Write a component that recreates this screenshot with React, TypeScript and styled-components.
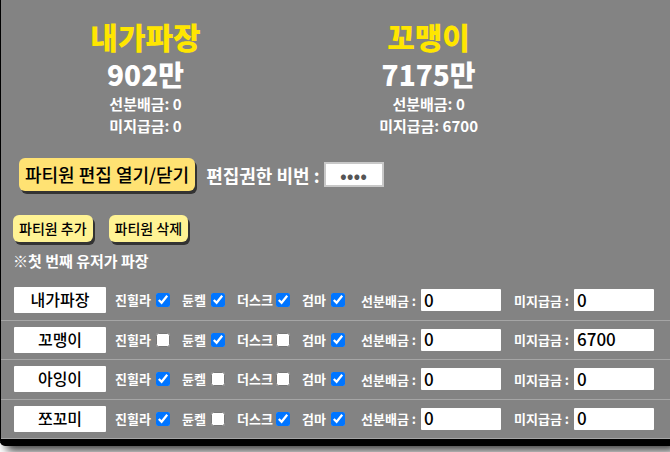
import React from "react";
import styled, { createGlobalStyle } from "styled-components";

const GlobalStyle = createGlobalStyle`
  *, *::before, *::after { box-sizing: border-box; }
  body {
    margin: 0;
    background: #fff;
    font-family: "Noto Sans CJK KR", "Noto Sans", sans-serif;
    overflow: hidden;
  }
  button, input { font-family: inherit; }
`;

const Page = styled.div`
  padding-bottom: 6px;
`;

const Panel = styled.main`
  background: #838383;
  color: #fff;
  font-weight: 700;
  border-left: 1px solid #000;
  border-bottom: 7px solid #000;
  border-bottom-left-radius: 5px;
  box-shadow: 6px 5px 10px rgba(0, 0, 0, 0.75);
`;

const Summary = styled.section`
  display: grid;
  grid-template-columns: repeat(2, 42.5%);
  padding: 17px 0 0 3px;
`;

const Member = styled.article`
  display: flex;
  flex-direction: column;
  align-items: center;
`;

const MemberName = styled.h2`
  margin: 0;
  color: #ffe600;
  font-size: 30px;
  font-weight: 900;
  line-height: 38px;
`;

const Share = styled.p`
  margin: 0;
  font-size: 28px;
  font-weight: 900;
  line-height: 38px;
`;

const Detail = styled.p`
  margin: 0;
  font-size: 15px;
  line-height: 22px;
`;

const EditBar = styled.section`
  display: flex;
  align-items: center;
  padding: 21px 0 0 18px;
`;

const ActionButton = styled.button<{ $large?: boolean }>`
  border: 0;
  border-radius: 6px;
  padding: 0 6px 2px;
  height: ${(p) => (p.$large ? 33 : 27)}px;
  background: ${(p) => (p.$large ? "#ffe273" : "#fff394")};
  box-shadow: 2px 3px 0 #333;
  color: #000;
  font-size: ${(p) => (p.$large ? 18 : 14)}px;
  font-weight: 500;
  white-space: nowrap;
  cursor: pointer;
`;

const PasswordLabel = styled.label`
  display: flex;
  align-items: center;
  gap: 4px;
  margin-left: 11px;
  font-size: 18px;
  line-height: 24px;
  white-space: nowrap;
`;

const PasswordInput = styled.input`
  width: 60px;
  height: 25px;
  padding: 0;
  border: 2px solid #c8c8c8;
  background: #fff;
  color: #555;
  font-size: 20px;
  text-align: center;
`;

const Tools = styled.section`
  display: flex;
  gap: 16px;
  padding: 24px 0 0 12px;
`;

const Note = styled.p`
  margin: 0;
  padding: 8px 0 8px 12px;
  font-size: 15px;
  line-height: 22px;
`;

const Roster = styled.form`
  display: grid;
  grid-auto-rows: 1fr;
  min-height: 159px;
  padding-top: 1px;
`;

const RosterRow = styled.fieldset`
  display: flex;
  align-items: center;
  min-width: 0;
  margin: 0;
  padding: 0 0 0 13px;
  border: 0;
  border-bottom: 1px solid #a5a5a5;
`;

const NameInput = styled.input`
  width: 92px;
  height: 26px;
  padding: 0 0 2px;
  border: 0;
  border-radius: 1px;
  background: #fff;
  color: #000;
  font-size: 16px;
  font-weight: 500;
  text-align: center;
`;

const Bosses = styled.div`
  display: grid;
  grid-template-columns: 55px 43px 53px 43px;
  gap: 12px;
  margin: 0 16px 0 9px;
`;

const BossLabel = styled.label`
  display: flex;
  align-items: center;
  justify-content: space-between;
  font-size: 13px;
  line-height: 20px;
  white-space: nowrap;
`;

const Check = styled.input`
  width: 14px;
  height: 14px;
  margin: 0;
  accent-color: #0075ff;
`;

const MoneyGroup = styled.div`
  display: flex;
  gap: 13px;
`;

const MoneyLabel = styled.label`
  display: flex;
  align-items: center;
  justify-content: space-between;
  width: 140px;
  font-size: 13px;
  white-space: nowrap;
`;

const MoneyInput = styled.input`
  width: 80px;
  height: 22px;
  padding: 0 0 2px 3px;
  border: 0;
  border-radius: 1px;
  background: #fff;
  color: #000;
  font-size: 17px;
  font-weight: 500;
`;

const bosses = ["진힐라", "듄켈", "더스크", "검마"];

const summaries = [
  { name: "내가파장", share: "902만", prepaid: "0", unpaid: "0" },
  { name: "꼬맹이", share: "7175만", prepaid: "0", unpaid: "6700" },
];

const roster = [
  { name: "내가파장", cleared: [true, true, true, true], prepaid: "0", unpaid: "0" },
  { name: "꼬맹이", cleared: [false, true, false, true], prepaid: "0", unpaid: "6700" },
  { name: "아잉이", cleared: [true, false, false, true], prepaid: "0", unpaid: "0" },
  { name: "쪼꼬미", cleared: [true, false, true, true], prepaid: "0", unpaid: "0" },
];

export default function App() {
  return (
    <Page>
      <GlobalStyle />
      <Panel>
        <Summary>
          {summaries.map((m) => (
            <Member key={m.name}>
              <MemberName>{m.name}</MemberName>
              <Share>{m.share}</Share>
              <Detail>선분배금: {m.prepaid}</Detail>
              <Detail>미지급금: {m.unpaid}</Detail>
            </Member>
          ))}
        </Summary>
        <EditBar>
          <ActionButton type="button" $large>
            파티원 편집 열기/닫기
          </ActionButton>
          <PasswordLabel>
            편집권한 비번 :
            <PasswordInput type="password" defaultValue="0000" />
          </PasswordLabel>
        </EditBar>
        <Tools>
          <ActionButton type="button">파티원 추가</ActionButton>
          <ActionButton type="button">파티원 삭제</ActionButton>
        </Tools>
        <Note>※첫 번째 유저가 파장</Note>
        <Roster>
          {roster.map((r) => (
            <RosterRow key={r.name}>
              <NameInput type="text" aria-label="파티원" defaultValue={r.name} />
              <Bosses>
                {bosses.map((boss, i) => (
                  <BossLabel key={boss}>
                    {boss}
                    <Check type="checkbox" defaultChecked={r.cleared[i]} />
                  </BossLabel>
                ))}
              </Bosses>
              <MoneyGroup>
                <MoneyLabel>
                  선분배금 :
                  <MoneyInput type="text" inputMode="numeric" defaultValue={r.prepaid} />
                </MoneyLabel>
                <MoneyLabel>
                  미지급금 :
                  <MoneyInput type="text" inputMode="numeric" defaultValue={r.unpaid} />
                </MoneyLabel>
              </MoneyGroup>
            </RosterRow>
          ))}
        </Roster>
      </Panel>
    </Page>
  );
}
